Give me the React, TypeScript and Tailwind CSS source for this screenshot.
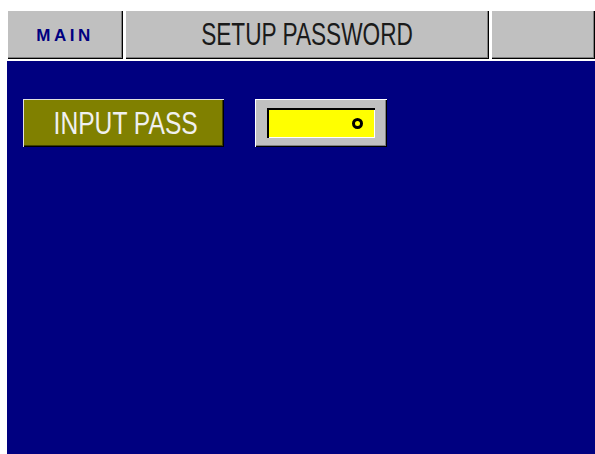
import React from "react";

const raised =
  "shadow-[inset_1px_1px_0_#ffffff,inset_-1px_-1px_0_#000000,inset_-2px_-2px_0_#808080]";

function HeaderKey({ width, children }: { width: string; children?: React.ReactNode }) {
  return (
    <div className={`flex h-full items-center justify-center bg-[#c0c0c0] ${raised} ${width}`}>
      {children}
    </div>
  );
}

export default function App() {
  return (
    <div className="flex h-[454px] w-[595px] flex-col overflow-hidden bg-white pl-[7px] pt-[10px] font-['Liberation_Sans',sans-serif]">
      <header className="flex h-[49px] gap-[2px]">
        <HeaderKey width="w-[116px]">
          <span className="pt-[2px] text-[17px] font-bold tracking-[3.5px] text-[#000080]">MAIN</span>
        </HeaderKey>
        <HeaderKey width="w-[364px]">
          <span className="inline-block origin-center scale-x-[0.73] text-[31px] leading-none text-[#1a1a1a]">
            SETUP PASSWORD
          </span>
        </HeaderKey>
        <HeaderKey width="flex-1" />
      </header>

      <main className="mt-[2px] flex flex-1 items-start gap-[31px] bg-[#000080] pl-[16px] pt-[38px]">
        <div className="flex h-[48px] w-[201px] items-center justify-center bg-[#808000] shadow-[inset_1px_1px_0_#e0e0e0,inset_-1px_-1px_0_#000000,inset_-2px_-2px_0_#404000]">
          <span className="inline-block translate-x-[2px] scale-x-[0.77] text-[32px] leading-none text-[#f0f0f0]">
            INPUT PASS
          </span>
        </div>

        <div className={`flex h-[48px] w-[132px] items-center justify-center bg-[#c0c0c0] ${raised}`}>
          <div className="flex h-[30px] w-[108px] items-center justify-end bg-[#ffff00] pr-[12px] shadow-[inset_2px_2px_0_#000000,inset_-1px_-1px_0_#ffffff]">
            <span className="h-[11px] w-[11px] rounded-full border-[3px] border-black" />
          </div>
        </div>
      </main>
    </div>
  );
}
